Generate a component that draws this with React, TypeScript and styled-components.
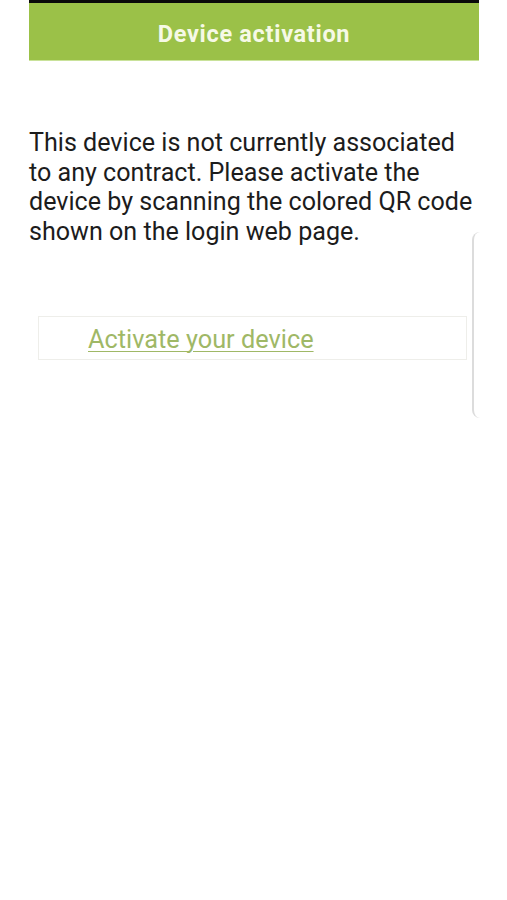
import React from "react";
import styled, { createGlobalStyle } from "styled-components";

const Global = createGlobalStyle`
  html, body { margin: 0; padding: 0; background: #ffffff; }
  body { font-family: Roboto, "Noto Sans", Arial, sans-serif; }
`;

const Screen = styled.div`
  position: relative;
  width: 507px;
  height: 900px;
  background: #ffffff;
  overflow: hidden;
`;

const Column = styled.div`
  width: 450px;
  margin: 0 0 0 29px;
  display: flex;
  flex-direction: column;
`;

const TopStrip = styled.div`
  height: 3px;
  background: #0a0a0a;
`;

const Header = styled.header`
  height: 58px;
  background: #9bc148;
  display: flex;
  align-items: center;
  justify-content: center;
  padding-top: 5px;
  border-bottom: 1px solid #c9e29a;
  box-sizing: border-box;
`;

const Title = styled.h1`
  margin: 0;
  font-family: Roboto, Arial, sans-serif;
  font-weight: 700;
  font-size: 23.5px;
  letter-spacing: 0.7px;
  color: #f6f9e6;
`;

const Message = styled.p`
  margin: 67px 0 0 0;
  font-family: Roboto, Arial, sans-serif;
  font-size: 25.1px;
  line-height: 29.7px;
  color: #1c1c1c;
`;

const ActionBox = styled.div`
  margin: 69px 12px 0 9px;
  height: 44px;
  border: 1px solid #eeeeea;
  box-sizing: border-box;
  display: flex;
  align-items: center;
  padding: 3px 0 0 49px;
`;

const ActionLink = styled.a`
  font-family: Roboto, Arial, sans-serif;
  font-size: 25.3px;
  color: #9fb866;
  text-decoration: underline;
  text-decoration-thickness: 1px;
  text-underline-offset: 3px;
  cursor: pointer;
`;

const EdgeHandle = styled.div`
  position: absolute;
  left: 472px;
  top: 232px;
  width: 8px;
  height: 186px;
  border-left: 2px solid #dcdcdc;
  border-top-left-radius: 8px;
  border-bottom-left-radius: 8px;
  box-sizing: border-box;
`;

export default function App() {
  return (
    <>
      <Global />
      <Screen>
        <Column>
          <TopStrip />
          <Header>
            <Title>Device activation</Title>
          </Header>
          <Message>
            This device is not currently associated to any contract. Please activate the device by
            scanning the colored QR code shown on the login web page.
          </Message>
          <ActionBox>
            <ActionLink>Activate your device</ActionLink>
          </ActionBox>
        </Column>
        <EdgeHandle />
      </Screen>
    </>
  );
}
